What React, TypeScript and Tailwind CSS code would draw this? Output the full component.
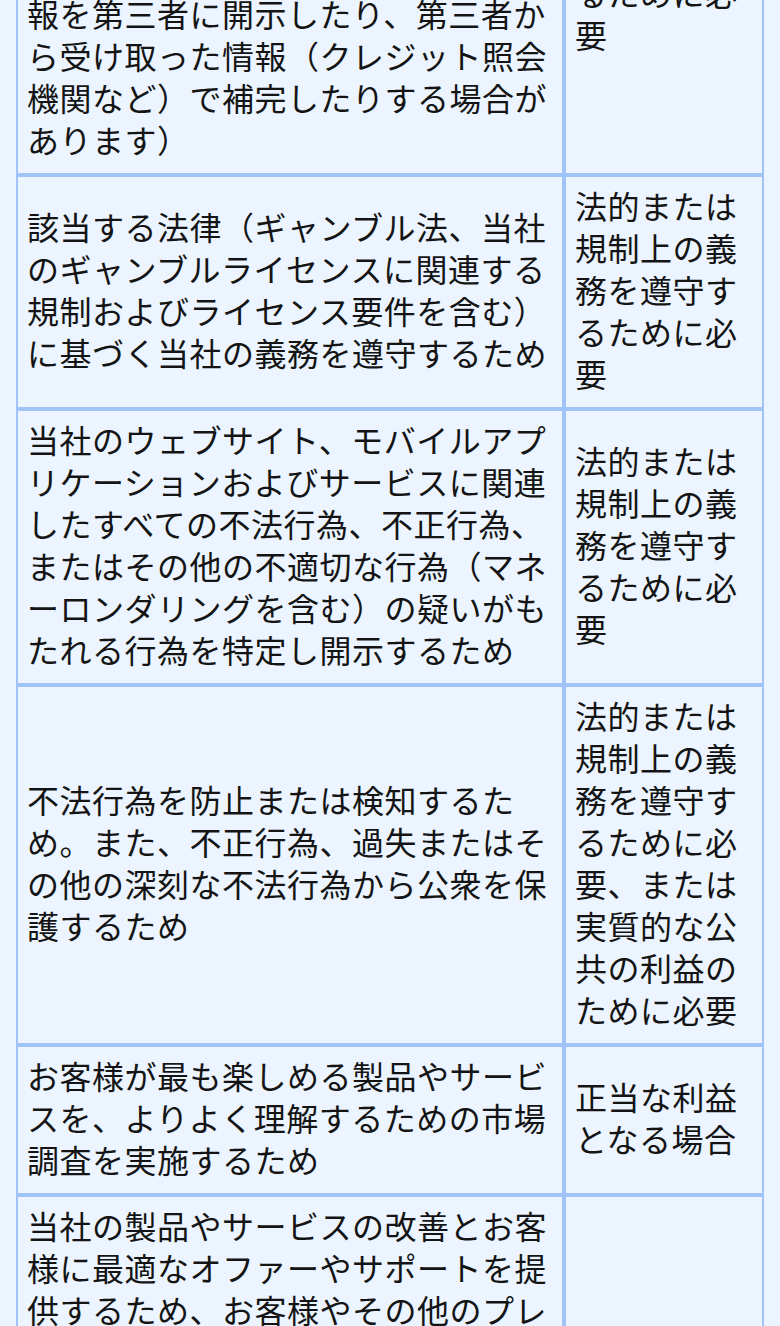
import React from 'react';

const rows = [
  {
    purpose:
      '本人確認、年齢確認、信用調査および不正防止のためのチェックを実施するため（これらのチェックを行うために、当社はお客様の個人情報の一部を本人確認サービスや不正防止機関などの第三者に提供し、その情報を第三者に開示したり、第三者から受け取った情報（クレジット照会機関など）で補完したりする場合があります）',
    basis: '法的または規制上の義務を遵守するために必要',
  },
  {
    purpose:
      '該当する法律（ギャンブル法、当社のギャンブルライセンスに関連する規制およびライセンス要件を含む）に基づく当社の義務を遵守するため',
    basis: '法的または規制上の義務を遵守するために必要',
  },
  {
    purpose:
      '当社のウェブサイト、モバイルアプリケーションおよびサービスに関連したすべての不法行為、不正行為、またはその他の不適切な行為（マネーロンダリングを含む）の疑いがもたれる行為を特定し開示するため',
    basis: '法的または規制上の義務を遵守するために必要',
  },
  {
    purpose:
      '不法行為を防止または検知するため。また、不正行為、過失またはその他の深刻な不法行為から公衆を保護するため',
    basis: '法的または規制上の義務を遵守するために必要、または実質的な公共の利益のために必要',
  },
  {
    purpose:
      'お客様が最も楽しめる製品やサービスを、よりよく理解するための市場調査を実施するため',
    basis: '正当な利益となる場合',
  },
  {
    purpose:
      '当社の製品やサービスの改善とお客様に最適なオファーやサポートを提供するため、お客様やその他のプレイヤーの行動や嗜好を分析し、当社のマーケティング活動およびプロモーションを改善するため、またお客様の利用状況に応じたサービスを提供するため',
    basis: '',
  },
];

const App = () => {
  return (
    <div
      className="h-[1326px] overflow-hidden bg-[#ebf4ff] px-4 text-[32px] leading-[42px] tracking-[0.5px] text-[#141414]"
      style={{ fontFamily: '"Noto Sans CJK JP", "Noto Sans", sans-serif' }}
    >
      {/* page is scrolled: first row starts above the viewport */}
      <div className="-mt-[269px] grid grid-cols-[548px_200px]">
        {rows.map((row, index) => (
          <React.Fragment key={index}>
            <div className="flex items-center border-2 border-[#a0c4f8] pt-[7px] pb-[13px] pl-[9px] pr-[11px]">
              <p>{row.purpose}</p>
            </div>
            <div className="flex items-center border-2 border-[#a0c4f8] pt-[7px] pb-[13px] pl-[9px] pr-[11px]">
              <p>{row.basis}</p>
            </div>
          </React.Fragment>
        ))}
      </div>
    </div>
  );
};

export default App;
